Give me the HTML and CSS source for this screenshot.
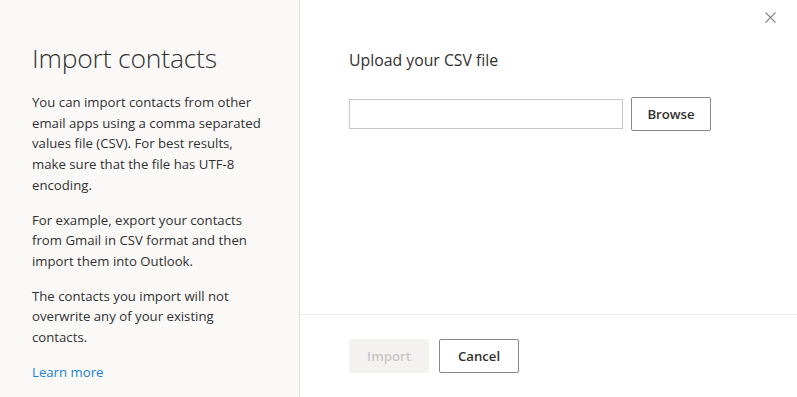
FILE: index.html
```html
<!DOCTYPE html>
<html lang="en">
<head>
    <meta charset="UTF-8">
    <title>Import contacts</title>
    <link rel="stylesheet" href="styles.css">
</head>
<body>

<div class="dialog">
    <aside class="info">
        <h1>Import contacts</h1>
        <p>You can import contacts from other email apps using a comma separated values file (CSV). For best results, make sure that the file has UTF-8 encoding.</p>
        <p>For example, export your contacts from Gmail in CSV format and then import them into Outlook.</p>
        <p>The contacts you import will not overwrite any of your existing contacts.</p>
        <a href="#" class="learn">Learn more</a>
    </aside>

    <section class="upload">
        <div class="upload-body">
            <h2>Upload your CSV file</h2>
            <div class="file-row">
                <input type="text" class="file-input">
                <button class="btn">Browse</button>
            </div>
        </div>
        <div class="footer">
            <button class="btn btn-disabled" disabled>Import</button>
            <button class="btn">Cancel</button>
        </div>
    </section>

    <button class="close" aria-label="Close">
        <svg width="11" height="11" viewBox="0 0 11 11">
            <path d="M0.5 0.5 L10.5 10.5 M10.5 0.5 L0.5 10.5" stroke="#8a8886" stroke-width="1.1" fill="none"/>
        </svg>
    </button>
</div>

</body>
</html>
```

FILE: styles.css
```css
body {
    margin: 0;
    font-family: 'Open Sans', sans-serif;
    color: #323130;
    background: #fff;
}
.dialog {
    position: relative;
    display: flex;
    width: 797px;
    height: 397px;
    overflow: hidden;
}
.info {
    width: 236px;
    flex-shrink: 0;
    background: #faf9f8;
    border-right: 1px solid #e1dfdd;
    padding: 40px 31px 0 32px;
}
.info h1 {
    font-size: 26.5px;
    font-weight: 300;
    line-height: 36px;
    margin: 0 0 16px;
    color: #323130;
    letter-spacing: -0.2px;
}
.info p {
    font-size: 13.2px;
    line-height: 20.7px;
    margin: 0 0 14px;
}
.learn {
    display: block;
    font-size: 13.2px;
    line-height: 21px;
    color: #1a7fd6;
    text-decoration: none;
}
.upload {
    flex: 1;
    display: flex;
    flex-direction: column;
}
.upload-body {
    flex: 1;
    padding: 49px 48px 0 49px;
}
.upload-body h2 {
    font-size: 15.8px;
    font-weight: 400;
    line-height: 22px;
    margin: 0 0 26px;
}
.file-row {
    display: flex;
    align-items: center;
    gap: 8px;
}
.file-input {
    box-sizing: border-box;
    width: 274px;
    height: 30px;
    margin: 0;
    border: 1px solid #c8c6c4;
    border-radius: 0;
    font-family: inherit;
    outline: none;
}
.btn {
    box-sizing: border-box;
    width: 80px;
    height: 34px;
    border: 1px solid #8a8886;
    border-radius: 2px;
    background: #fff;
    color: #323130;
    font-family: 'Open Sans', sans-serif;
    font-size: 13.2px;
    font-weight: 600;
    padding: 0;
    cursor: pointer;
}
.btn-disabled {
    background: #f3f2f1;
    border-color: #f3f2f1;
    color: #c8c6c4;
    cursor: default;
}
.footer {
    box-sizing: border-box;
    height: 83px;
    border-top: 1px solid #edebe9;
    padding: 24px 0 0 49px;
    display: flex;
    align-items: flex-start;
    gap: 10px;
}
.close {
    position: absolute;
    top: 12px;
    right: 21px;
    border: none;
    background: none;
    padding: 0;
    width: 11px;
    height: 11px;
    cursor: pointer;
}
.close svg {
    display: block;
}
```
